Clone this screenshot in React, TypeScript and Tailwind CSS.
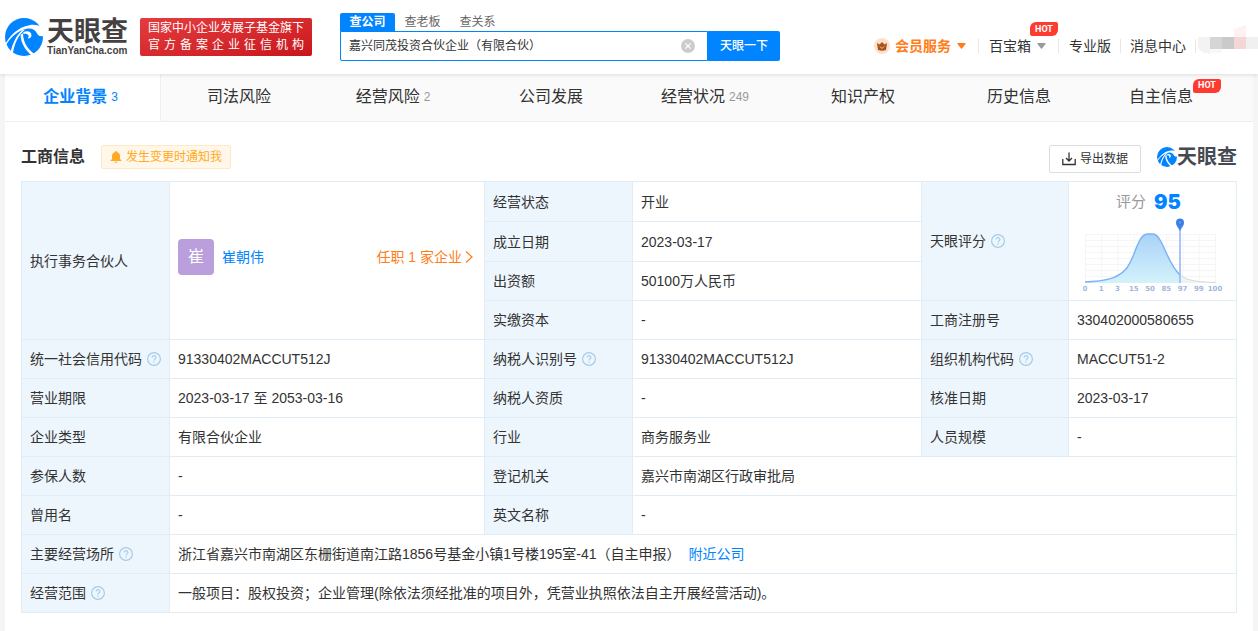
import { ReactNode } from 'react';
import { clsx } from 'clsx';

const tabs = [
  { name: '企业背景', count: '3', active: true },
  { name: '司法风险' },
  { name: '经营风险', count: '2' },
  { name: '公司发展' },
  { name: '经营状况', count: '249' },
  { name: '知识产权' },
  { name: '历史信息' },
  { name: '自主信息', hot: true },
];

const ticks = ['0', '1', '3', '15', '50', '85', '97', '99', '100'];

function Swirl({ className }: { className: string }) {
  return (
    <svg viewBox="4 5 112 112" className={className} aria-hidden="true">
      <circle cx="60" cy="61" r="56" fill="#0084ff" />
      <g fill="#fff">
        <path d="M3 84C18 58 40 32 76 26C92 23 106 27 113 33L120 56C111 62 102 58 98 50C93 40 82 34 68 37C42 42 18 64 5 89Z" />
        <path d="M62 40C44 54 31 80 27 112L20 107C26 80 38 54 56 40Z" />
        <path d="M50 54C50 78 64 100 84 116L92 112C70 96 58 78 57 50Z" />
        <path d="M58 47C70 40 82 46 82 55C82 62 77 66 71 65C77 59 74 50 58 52Z" />
      </g>
    </svg>
  );
}

function Hot({ className }: { className: string }) {
  return (
    <span
      className={clsx(
        'absolute flex h-[14px] w-7 items-center justify-center rounded-tl-md rounded-tr-xs rounded-br-md rounded-bl-xs bg-[#ff3b30] font-[Roboto,sans-serif] text-[9px] font-bold text-white',
        className
      )}
    >
      HOT
    </span>
  );
}

function Help() {
  return (
    <svg viewBox="0 0 14 14" className="ml-[5px] inline-block size-[14px] align-[-2px]" fill="none" stroke="#a5cbe9" strokeWidth="1.2">
      <circle cx="7" cy="7" r="6.4" />
      <path d="M5.1 5.6C5.1 3.1 8.9 3.1 8.9 5.5C8.9 6.9 7 6.9 7 8.5M7 9.6V10.7" />
    </svg>
  );
}

function Caret({ className }: { className: string }) {
  return (
    <svg viewBox="0 0 9 6" className={clsx('h-[6px] w-[9px]', className)} fill="currentColor">
      <path d="M1 0H8Q9 0 8.5 1L5 5.5Q4.5 6 4 5.5L.5 1Q0 0 1 0Z" />
    </svg>
  );
}

function Label({ children, help, rowSpan }: { children: ReactNode; help?: boolean; rowSpan?: number }) {
  return (
    <th scope="row" rowSpan={rowSpan} className="border border-[#e0ecf6] bg-[#eef6fd] px-2 text-left font-normal whitespace-nowrap">
      {children}
      {help && <Help />}
    </th>
  );
}

function Value({ children, colSpan, rowSpan, className }: { children: ReactNode; colSpan?: number; rowSpan?: number; className?: string }) {
  return (
    <td colSpan={colSpan} rowSpan={rowSpan} className={clsx('border border-[#e0ecf6] px-2', className)}>
      {children}
    </td>
  );
}

function ScoreChart() {
  return (
    <svg viewBox="0 0 140 76" className="mx-auto block h-[76px] w-[140px]">
      <defs>
        <linearGradient id="area" x1="0" y1="0" x2="0" y2="1">
          <stop offset="0" stopColor="#a9d2f7" />
          <stop offset="1" stopColor="#d3f2fa" />
        </linearGradient>
      </defs>
      <g stroke="#f5f5f6">
        {ticks.map((t, i) => (
          <path key={t} d={`M${2.5 + i * 16.25} 16V65`} />
        ))}
        {[16.5, 22.5, 28.5, 34.5, 40.5, 46.5, 52.5, 58.5, 64.5].map((y) => (
          <path key={y} d={`M2 ${y}H133`} />
        ))}
      </g>
      <path d="M2 64C22 63 34 61 43 51C53 39 54 16 65 16H70C80 17 83 44 97 57V65H2Z" fill="url(#area)" />
      <path d="M97 57C105 63 115 64 133 64.5V65H97Z" fill="#f1f2f3" />
      <path d="M97 57C105 63 115 64 133 64.5" fill="none" stroke="#d8d9da" />
      <path d="M2 64C22 63 34 61 43 51C53 39 54 16 65 16H70C80 17 83 44 97 57" fill="none" stroke="#78b2f8" strokeWidth="1.4" />
      <path d="M97 12V65" stroke="#8fb3fb" strokeWidth="1.5" />
      <path d="M97 13C95 9 93 8 93 4.5A4 4 0 0 1 101 4.5C101 8 99 9 97 13Z" fill="#4282ee" />
      <circle cx="97" cy="4.5" r="2" fill="#4f9df0" stroke="#2f65b8" strokeWidth=".6" />
      <g fill="#a3b7dc" fontSize="7" fontWeight="bold" fontFamily="DejaVu Sans" textAnchor="middle">
        {ticks.map((t, i) => (
          <text key={t} x={2 + i * 16.25} y="73">
            {t}
          </text>
        ))}
      </g>
    </svg>
  );
}

function Header() {
  return (
    <header className="relative z-10 flex h-[74px] bg-white pl-[5px] shadow-[0_1px_4px_rgba(0,0,0,0.12)]">
      <a href="#" className="mt-[18px] flex h-[38px] w-[124px] shrink-0">
        <Swirl className="size-[38px] shrink-0" />
        <span className="ml-1 flex flex-col text-[#454142]">
          <span className="text-[27px] leading-[28px] font-bold whitespace-nowrap">天眼查</span>
          <span className="text-[10px] leading-[10px] font-bold">TianYanCha.com</span>
        </span>
      </a>
      <div className="mt-[18px] ml-[11px] h-[38px] w-[172px] shrink-0 rounded-xs bg-linear-to-br from-[#e53b3f] to-[#c9151c] px-2 text-xs leading-[17px] text-white">
        <p className="mt-[2px] whitespace-nowrap">国家中小企业发展子基金旗下</p>
        <p className="[text-align-last:justify]">官 方 备 案 企 业 征 信 机 构</p>
      </div>

      <div className="mt-[13px] ml-7 w-[440px] shrink-0">
        <div className="flex h-[18px] text-xs text-[#666]">
          <button className="w-[55px] rounded-t-xs bg-[#0084ff] font-bold text-white">查公司</button>
          <button className="w-[55px]">查老板</button>
          <button className="w-[55px]">查关系</button>
        </div>
        <form className="flex h-[30px]">
          <div className="flex flex-1 items-center rounded-bl-xs border border-[#0084ff] pr-3 pl-2">
            <input aria-label="搜索公司" defaultValue="嘉兴同茂投资合伙企业（有限合伙）" className="min-w-0 flex-1 text-xs text-[#333] outline-none" />
            <button type="button" aria-label="清空">
              <svg viewBox="0 0 14 14" className="block size-[14px]">
                <circle cx="7" cy="7" r="7" fill="#ccc" />
                <path d="M4.3 4.3L9.7 9.7M9.7 4.3L4.3 9.7" stroke="#fff" strokeWidth="1.2" />
              </svg>
            </button>
          </div>
          <button type="button" className="w-[72px] rounded-r-xs bg-[#0084ff] text-xs font-medium text-white">
            天眼一下
          </button>
        </form>
      </div>

      <nav className="mt-9 ml-auto flex h-5 shrink-0 items-center text-sm text-[#333]">
        <a href="#" className="flex items-center font-bold text-[#ff7d18]">
          <svg viewBox="0 0 16 16" className="mr-[5px] size-4">
            <circle cx="8" cy="8" r="8" fill="#fde1cb" />
            <path d="M3 5L5.5 6.5L8 4L10.5 6.5L13 5L12 12Q8 13.5 4 12Z" fill="#a8541c" />
            <path d="M6 8.5L8 10.5L10 8.5" fill="none" stroke="#fbc79c" />
          </svg>
          会员服务
          <Caret className="ml-[6px]" />
        </a>
        <i className="mr-[10px] ml-3 h-[14px] w-px bg-[#e6e6e6]" />
        <a href="#" className="relative flex items-center">
          百宝箱
          <Caret className="ml-[6px] text-[#999]" />
          <Hot className="-top-[14px] left-[41px]" />
        </a>
        <i className="mr-[10px] ml-3 h-[14px] w-px bg-[#e6e6e6]" />
        <a href="#">专业版</a>
        <i className="mx-[9px] h-[14px] w-px bg-[#e6e6e6]" />
        <a href="#">消息中心</a>
        <i className="ml-[9px] h-[14px] w-px bg-[#e6e6e6]" />
        <svg viewBox="0 0 60 30" className="-mt-3 ml-[2px] h-[30px] w-[60px]">
          <path d="M0 12H12V29Q2 28 0 22Z" fill="#f3f3f3" />
          <path d="M12 12H24V24H12Z" fill="#d6d5d6" />
          <path d="M24 12H36V24H24Z" fill="#cbcacb" />
          <path d="M36 12H48V24H36Z" fill="#f3d6d8" />
          <path d="M48 12H60V24H48Z" fill="#f0f0f1" />
          <path d="M36 4L48 0V12H36Z" fill="#fdf1f1" />
          <path d="M12 24H24V28H12Z" fill="#f8f8f8" />
        </svg>
      </nav>
    </header>
  );
}

export default function App() {
  return (
    <div className="min-h-screen bg-[#f5f5f5] font-['Liberation_Sans','Noto_Sans_CJK_SC',sans-serif] text-[#333]">
      <Header />
      <main className="mx-[5px] min-h-[557px] bg-white">
        <nav className="grid h-12 grid-cols-8 border-b border-[#eee] bg-[#fafafa]">
          {tabs.map((tab) => (
            <a
              key={tab.name}
              href="#"
              className={clsx(
                'flex items-center justify-center pb-px text-base',
                tab.active && 'border-r border-[#eee] bg-white text-[#0084ff]',
                tab.count && 'pr-1',
                tab.hot && 'pr-7'
              )}
            >
              <span className={clsx('relative', tab.active && 'font-bold')}>
                {tab.name}
                {tab.hot && <Hot className="-top-[6px] left-16" />}
              </span>
              {tab.count && <span className={clsx('ml-1 text-xs', !tab.active && 'text-[#999]')}>{tab.count}</span>}
            </a>
          ))}
        </nav>

        <section className="px-4 pb-4">
          <div className="flex h-[59px] items-center pt-[10px]">
            <h2 className="text-base font-bold">工商信息</h2>
            <button className="ml-4 flex h-6 items-center rounded-xs border border-[#ffe9c4] bg-[#fff7ea] px-2 text-xs text-[#ffaa22]">
              <svg viewBox="0 0 12 12" className="mr-1 size-3" fill="currentColor">
                <path d="M6 0Q7 0 7 1Q10 2 10 5V8L11.5 9.5V10H.5V9.5L2 8V5Q2 2 5 1Q5 0 6 0ZM4.5 10.7H7.5Q7 12 6 12Q5 12 4.5 10.7Z" />
              </svg>
              发生变更时通知我
            </button>
            <button className="mt-1 ml-auto flex h-7 w-[92px] items-center justify-center rounded-xs border border-[#ddd] text-xs">
              <svg viewBox="0 0 14 14" className="mr-1 size-[14px]" fill="none" stroke="#333" strokeWidth="1.3">
                <path d="M.8 7V12.5H13.2V7M7 .5V9M4 6L7 9L10 6" />
              </svg>
              导出数据
            </button>
            <div className="ml-4 flex items-center text-[#454a52]">
              <Swirl className="size-5" />
              <span className="text-[20px] leading-5 font-bold">天眼查</span>
            </div>
          </div>

          <table className="w-full table-fixed border-collapse text-sm leading-5">
            <colgroup>
              <col className="w-[148px]" />
              <col className="w-[315px]" />
              <col className="w-[148px]" />
              <col className="w-[289px]" />
              <col className="w-[147px]" />
              <col className="w-[168px]" />
            </colgroup>
            <tbody>
              <tr className="h-10">
                <Label rowSpan={4}>执行事务合伙人</Label>
                <Value rowSpan={4} className="pb-2">
                  <div className="flex items-center">
                    <span className="flex size-9 items-center justify-center rounded-sm bg-[#bb9fdc] text-base text-white">崔</span>
                    <a href="#" className="ml-2 text-[#0084ff]">崔朝伟</a>
                    <a href="#" className="mr-[3px] ml-auto flex items-center text-[#ff7d18]">
                      任职 1 家企业
                      <svg viewBox="0 0 8 12" className="ml-[3px] h-3 w-2" fill="none" stroke="currentColor" strokeWidth="1.2">
                        <path d="M1 .5L7 6L1 11.5" />
                      </svg>
                    </a>
                  </div>
                </Value>
                <Label>经营状态</Label>
                <Value>开业</Value>
                <Label rowSpan={3} help>天眼评分</Label>
                <Value rowSpan={3}>
                  <div className="-mx-2 h-[110px]">
                    <p className="flex h-8 items-center justify-center gap-2 pr-2">
                      <span className="text-[15px] text-[#999]">评分</span>
                      <b className="font-[Inter,sans-serif] text-xl font-black text-[#0084ff]">95</b>
                    </p>
                    <ScoreChart />
                  </div>
                </Value>
              </tr>
              <tr className="h-10">
                <Label>成立日期</Label>
                <Value>2023-03-17</Value>
              </tr>
              <tr className="h-[39px]">
                <Label>出资额</Label>
                <Value>50100万人民币</Value>
              </tr>
              <tr className="h-[39px]">
                <Label>实缴资本</Label>
                <Value>-</Value>
                <Label>工商注册号</Label>
                <Value>330402000580655</Value>
              </tr>
              <tr className="h-[39px]">
                <Label help>统一社会信用代码</Label>
                <Value>91330402MACCUT512J</Value>
                <Label help>纳税人识别号</Label>
                <Value>91330402MACCUT512J</Value>
                <Label help>组织机构代码</Label>
                <Value>MACCUT51-2</Value>
              </tr>
              <tr className="h-[39px]">
                <Label>营业期限</Label>
                <Value>2023-03-17 至 2053-03-16</Value>
                <Label>纳税人资质</Label>
                <Value>-</Value>
                <Label>核准日期</Label>
                <Value>2023-03-17</Value>
              </tr>
              <tr className="h-[39px]">
                <Label>企业类型</Label>
                <Value>有限合伙企业</Value>
                <Label>行业</Label>
                <Value>商务服务业</Value>
                <Label>人员规模</Label>
                <Value>-</Value>
              </tr>
              <tr className="h-[39px]">
                <Label>参保人数</Label>
                <Value>-</Value>
                <Label>登记机关</Label>
                <Value colSpan={3}>嘉兴市南湖区行政审批局</Value>
              </tr>
              <tr className="h-[39px]">
                <Label>曾用名</Label>
                <Value>-</Value>
                <Label>英文名称</Label>
                <Value colSpan={3}>-</Value>
              </tr>
              <tr className="h-[39px]">
                <Label help>主要经营场所</Label>
                <Value colSpan={5}>
                  浙江省嘉兴市南湖区东栅街道南江路1856号基金小镇1号楼195室-41（自主申报）
                  <a href="#" className="ml-2 text-[#0084ff]">附近公司</a>
                </Value>
              </tr>
              <tr className="h-[39px]">
                <Label help>经营范围</Label>
                <Value colSpan={5}>一般项目：股权投资；企业管理(除依法须经批准的项目外，凭营业执照依法自主开展经营活动)。</Value>
              </tr>
            </tbody>
          </table>
        </section>
      </main>
    </div>
  );
}
